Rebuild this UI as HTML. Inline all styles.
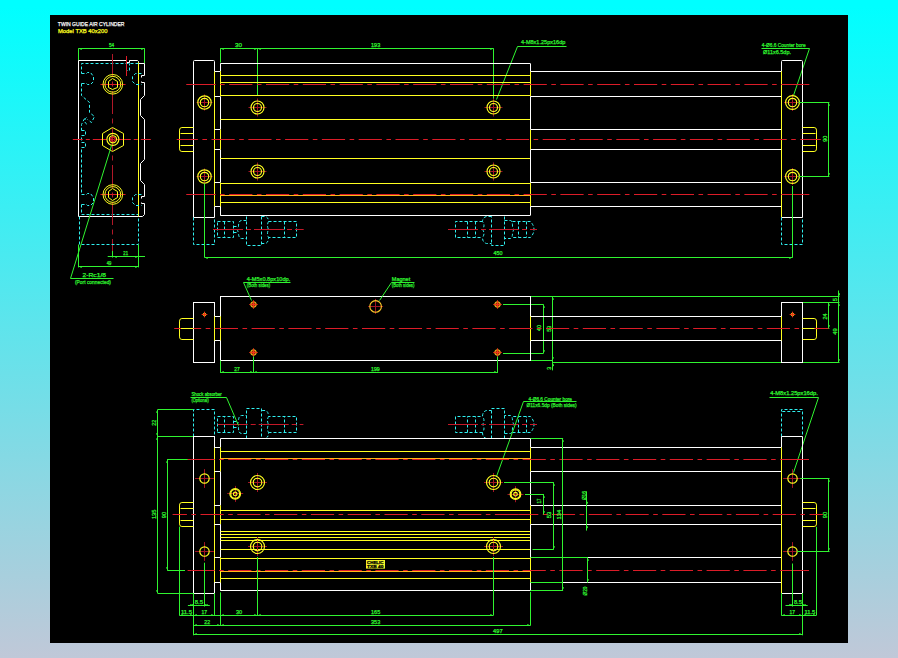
<!DOCTYPE html>
<html lang="en">
<head>
<meta charset="utf-8">
<title>Twin Guide Air Cylinder - TXB 40x200</title>
<style>
html,body{margin:0;padding:0;overflow:hidden;}
body{width:898px;height:658px;overflow:hidden;background:linear-gradient(to bottom,#00ffff 0px,#00ffff 6px,#c0c8d8 658px);font-family:"Liberation Sans",sans-serif;}
#sheet{position:absolute;left:50px;top:15px;width:798px;height:628px;background:#000;}
svg{position:absolute;left:0;top:0;}
svg path,svg circle,svg rect{fill:none;stroke-width:1;}
svg circle{stroke-width:1.15;}
svg text{font-family:"Liberation Sans",sans-serif;stroke-width:0.25;}
</style>
</head>
<body>
<div id="sheet"></div>
<svg width="898" height="658" viewBox="0 0 898 658">
<text x="57.8" y="25.8" fill="#fff" stroke="#fff" font-size="6.2" textLength="66.7" lengthAdjust="spacingAndGlyphs">TWIN GUIDE AIR CYLINDER</text>
<text x="58" y="32.8" fill="#ffff20" stroke="#ffff20" font-size="5.6" textLength="49.5" lengthAdjust="spacingAndGlyphs">Model TXB 40x200</text>
<path d="M78.4 48.5L144.7 48.5" stroke="#30f430"/>
<path d="M78.5 48.4L78.5 60.5" stroke="#30f430"/>
<path d="M144.5 48.4L144.5 63.4" stroke="#30f430"/>
<text x="109" y="46.5" fill="#30f430" stroke="#30f430" font-size="5.6" textLength="5.2" lengthAdjust="spacingAndGlyphs">54</text>
<path d="M78.5 216.5L78.5 60.5L126.5 60.5L126.5 62.5L129.5 62.5L129.5 60.5L137.5 60.5L138.5 61.5L138.5 63.5L144.5 63.5L144.5 75.5L141.5 75.5L141.5 77.5" stroke="#ffffff"/>
<path d="M141.5 81.5L141.5 82.5L144.5 82.5L144.5 95.5L140.5 99.5L140.5 115.5L144.5 119.5L144.5 159.5L140.5 163.5L140.5 180.5L144.5 184.5L144.5 196.5L141.5 196.5L141.5 198.5" stroke="#ffffff"/>
<path d="M141.5 202.5L141.5 203.5L144.5 203.5L144.5 214.5L142.5 216.5L78.5 216.5" stroke="#ffffff"/>
<path d="M138.5 62L138.5 216.4" stroke="#ffff20"/>
<path d="M138.5 63.5H81.5V73.5" stroke="#30f0f0" stroke-dasharray="3 2"/>
<path d="M126.5 63.5V70.5H129.5V63.5" stroke="#30f0f0" stroke-dasharray="3 2"/>
<path d="M81.5 73.5H86.5L87.5 72.5H90.5L93.5 76.5V81.5L90.5 84.5H87.5L86.5 83.5H81.5" stroke="#30f0f0" stroke-dasharray="3 2"/>
<path d="M141.5 73.5H135.5L132.5 76.5V81.5L135.5 84.5H141.5" stroke="#30f0f0" stroke-dasharray="3 2"/>
<path d="M81.5 83.5V95.5L89.5 102.5V112.5L94.5 116.5L91.5 122.5L87.5 119.5M84.5 118.5L81.5 124.5V130.5" stroke="#30f0f0" stroke-dasharray="3 2"/>
<path d="M86.5 117.5C83.5 119.5 84.5 124.5 88.5 124.5" stroke="#30f0f0" stroke-dasharray="3 2"/>
<path d="M81.5 130.5H85.5V135.5H81.5V142.5H85.5V147.5H81.5V194.5" stroke="#30f0f0" stroke-dasharray="3 2"/>
<path d="M81.5 194.5H86.5L87.5 193.5H90.5L93.5 197.5V202.5L90.5 205.5H87.5L86.5 204.5H81.5" stroke="#30f0f0" stroke-dasharray="3 2"/>
<path d="M141.5 194.5H135.5L132.5 197.5V202.5L135.5 205.5H141.5" stroke="#30f0f0" stroke-dasharray="3 2"/>
<path d="M81.5 204.5V214.5H138.5" stroke="#30f0f0" stroke-dasharray="3 2"/>
<path d="M112.5 54L112.5 252" stroke="#b01828" stroke-dasharray="23 4.5 5 4.5"/>
<path d="M72.8 139.5L150.8 139.5" stroke="#dc1c28" stroke-dasharray="14 3 4 3" stroke-dashoffset="4"/>
<path d="M126.5 56L126.5 76" stroke="#dc1c28"/>
<path d="M100.5 84.5L125.5 84.5" stroke="#dc1c28"/>
<circle cx="112.8" cy="84.3" r="9.8" stroke="#ffff20" style="stroke-width:1"/>
<circle cx="112.8" cy="84.3" r="7.9" stroke="#ffff20" style="stroke-width:1"/>
<path d="M112.5 78.5L117.5 81.5L117.5 87.5L112.5 89.5L108.5 87.5L108.5 81.5Z" stroke="#ffff20"/>
<path d="M100.5 194.5L125.5 194.5" stroke="#dc1c28"/>
<circle cx="112.8" cy="194.5" r="9.8" stroke="#ffff20" style="stroke-width:1"/>
<circle cx="112.8" cy="194.5" r="7.9" stroke="#ffff20" style="stroke-width:1"/>
<path d="M112.5 188.5L117.5 191.5L117.5 197.5L112.5 200.5L108.5 197.5L108.5 191.5Z" stroke="#ffff20"/>
<path d="M112.5 127.5L123.5 133.5L123.5 145.5L112.5 151.5L102.5 145.5L102.5 133.5Z" stroke="#ffff20"/>
<circle cx="112.9" cy="139.3" r="6" stroke="#ffff20"/>
<circle cx="112.9" cy="139.3" r="3.6" stroke="#ffff20"/>
<circle cx="112.9" cy="139.3" r="2.2" stroke="#dc1c28" fill="#e04010"/>
<path d="M79.5 216.5V244.5H138.5V216.5" stroke="#30f0f0" stroke-dasharray="3 2"/>
<path d="M112.5 251L112.5 257.5" stroke="#30f430"/>
<path d="M107.7 256.5L145 256.5" stroke="#30f430"/>
<path d="M138.5 244.5L138.5 267.4" stroke="#30f430"/>
<path d="M78.5 244.5L78.5 267.4" stroke="#30f430"/>
<path d="M78.4 266.5L138.6 266.5" stroke="#30f430"/>
<text x="123.3" y="254.8" fill="#30f430" stroke="#30f430" font-size="5.6" textLength="4.7" lengthAdjust="spacingAndGlyphs">21</text>
<text x="106.8" y="264.9" fill="#30f430" stroke="#30f430" font-size="5.6" textLength="4.6" lengthAdjust="spacingAndGlyphs">49</text>
<path d="M111.5 145.5L70.5 278.5L113.5 278.5" stroke="#30f430"/>
<text x="82.6" y="276.9" fill="#30f430" stroke="#30f430" font-size="5.6" textLength="23.4" lengthAdjust="spacingAndGlyphs">2-Rc1/8</text>
<text x="75" y="284.1" fill="#30f430" stroke="#30f430" font-size="5.6" textLength="36" lengthAdjust="spacingAndGlyphs">(Port connected)</text>
<path d="M220.3 48.5L493.5 48.5" stroke="#30f430"/>
<path d="M220.5 48.4L220.5 62.5" stroke="#30f430"/>
<path d="M257.5 48.4L257.5 96" stroke="#30f430"/>
<path d="M493.5 48.4L493.5 99" stroke="#30f430"/>
<text x="235" y="46.5" fill="#30f430" stroke="#30f430" font-size="5.6" textLength="7" lengthAdjust="spacingAndGlyphs">30</text>
<text x="371" y="46.5" fill="#30f430" stroke="#30f430" font-size="5.6" textLength="9.2" lengthAdjust="spacingAndGlyphs">193</text>
<path d="M566.5 46.5L517.5 46.5L496.5 99.5" stroke="#30f430"/>
<text x="521" y="44" fill="#30f430" stroke="#30f430" font-size="5.6" textLength="44.3" lengthAdjust="spacingAndGlyphs">4-M8x1.25px16dp</text>
<path d="M761.5 48.5L809.5 48.5L793.5 95.5" stroke="#30f430"/>
<text x="761.8" y="46.9" fill="#30f430" stroke="#30f430" font-size="5.6" textLength="43.8" lengthAdjust="spacingAndGlyphs">4-Ø6.6 Counter bore</text>
<text x="763" y="53.7" fill="#30f430" stroke="#30f430" font-size="5.6" textLength="28" lengthAdjust="spacingAndGlyphs">Ø11x6.5dp.</text>
<path d="M193.5 217.5V61.5Q193.5 60.5 194.5 60.5H213.5Q214.5 60.5 214.5 61.5" stroke="#ffffff"/>
<path d="M193.4 217.5L214.6 217.5" stroke="#ffffff"/>
<path d="M214.5 61.5L214.5 71.2" stroke="#ffffff"/>
<path d="M214.5 71.2L214.5 206.5" stroke="#ffff20"/>
<path d="M214.5 206.5L214.5 217.3" stroke="#ffffff"/>
<path d="M214.6 71.5L220.3 71.5" stroke="#ffffff"/>
<path d="M214.6 96.5L220.3 96.5" stroke="#ffffff"/>
<path d="M214.6 129.5L220.3 129.5" stroke="#ffffff"/>
<path d="M214.6 149.5L220.3 149.5" stroke="#ffffff"/>
<path d="M214.6 182.5L220.3 182.5" stroke="#ffffff"/>
<path d="M214.6 206.5L220.3 206.5" stroke="#ffffff"/>
<path d="M220.5 63.6L220.5 71.2" stroke="#ffffff"/>
<path d="M220.5 71.2L220.5 96.5" stroke="#ffff20"/>
<path d="M220.5 96.5L220.5 129.5" stroke="#ffffff"/>
<path d="M220.5 129.5L220.5 149.7" stroke="#ffff20"/>
<path d="M220.5 149.7L220.5 182.6" stroke="#ffffff"/>
<path d="M220.5 182.6L220.5 215.3" stroke="#ffff20"/>
<path d="M220.5 206.5L220.5 215.3" stroke="#ffffff"/>
<path d="M220.3 63.5L530.4 63.5" stroke="#ffffff"/>
<path d="M220.3 215.5L530.4 215.5" stroke="#ffffff"/>
<path d="M220.3 75.5L530.4 75.5" stroke="#ffff20"/>
<path d="M220.3 82.5L530.4 82.5" stroke="#ffff20"/>
<path d="M220.3 95.5L530.4 95.5" stroke="#ffff20"/>
<path d="M220.3 119.5L530.4 119.5" stroke="#ffff20"/>
<path d="M220.3 158.5L530.4 158.5" stroke="#ffff20"/>
<path d="M220.3 183.5L530.4 183.5" stroke="#ffff20"/>
<path d="M220.3 202.5L530.4 202.5" stroke="#ffff20"/>
<path d="M530.5 63.6L530.5 71.2" stroke="#ffffff"/>
<path d="M530.5 71.2L530.5 96.5" stroke="#ffff20"/>
<path d="M530.5 96.5L530.5 129.5" stroke="#ffffff"/>
<path d="M530.5 129.5L530.5 149.7" stroke="#ffff20"/>
<path d="M530.5 149.7L530.5 182.6" stroke="#ffffff"/>
<path d="M530.5 182.6L530.5 206.5" stroke="#ffff20"/>
<path d="M530.5 206.5L530.5 215.3" stroke="#ffffff"/>
<path d="M530.4 71.5L781.3 71.5" stroke="#ffffff"/>
<path d="M530.4 96.5L781.3 96.5" stroke="#ffffff"/>
<path d="M530.4 129.5L781.3 129.5" stroke="#ffffff"/>
<path d="M530.4 149.5L781.3 149.5" stroke="#ffffff"/>
<path d="M530.4 182.5L781.3 182.5" stroke="#ffffff"/>
<path d="M530.4 206.5L781.3 206.5" stroke="#ffffff"/>
<path d="M781.5 71.5V61.5Q781.5 60.5 782.5 60.5H801.5Q802.5 60.5 802.5 61.5V217.5H781.5" stroke="#ffffff"/>
<path d="M781.5 71.2L781.5 217.3" stroke="#ffff20"/>
<path d="M193.5 127.5H181.9Q179.5 127.5 179.5 130.1V148.9Q179.5 151.5 181.9 151.5H193.5" stroke="#ffff20"/>
<path d="M193.5 133.5L180.5 133.5" stroke="#ffff20"/>
<path d="M193.5 145.5L180.5 145.5" stroke="#ffff20"/>
<path d="M802.5 127.5H814.1Q816.5 127.5 816.5 130.1V148.9Q816.5 151.5 814.1 151.5H802.5" stroke="#ffff20"/>
<path d="M802.5 133.5L815.5 133.5" stroke="#ffff20"/>
<path d="M802.5 145.5L815.5 145.5" stroke="#ffff20"/>
<path d="M186.5 84.5L809.2 84.5" stroke="#dc1c28" stroke-dasharray="23.2 4.5 4.6 4.5" stroke-dashoffset="30.9"/>
<path d="M186.5 84.5L192.4 84.5" stroke="#dc1c28"/>
<path d="M804.4 84.5L809.2 84.5" stroke="#dc1c28"/>
<path d="M176.7 139.5L820.8 139.5" stroke="#dc1c28" stroke-dasharray="23.2 4.5 4.6 4.5" stroke-dashoffset="2"/>
<path d="M220.3 195.5L530.4 195.5" stroke="#ffb818"/>
<path d="M186.5 194.5L809.2 194.5" stroke="#dc1c28" stroke-dasharray="23.2 4.5 4.6 4.5" stroke-dashoffset="30.9"/>
<path d="M186.5 194.5L192.4 194.5" stroke="#dc1c28"/>
<path d="M804.4 194.5L809.2 194.5" stroke="#dc1c28"/>
<path d="M196.5 102.5L212.5 102.5" stroke="#a01424"/>
<path d="M204.5 94.5L204.5 110.5" stroke="#a01424"/>
<circle cx="204.5" cy="102.5" r="6.7" stroke="#ffff20"/>
<circle cx="204.5" cy="102.5" r="4.2" stroke="#ffff20"/>
<path d="M196.5 176.5L212.5 176.5" stroke="#a01424"/>
<path d="M204.5 168.5L204.5 184.5" stroke="#a01424"/>
<circle cx="204.5" cy="176.5" r="6.7" stroke="#ffff20"/>
<circle cx="204.5" cy="176.5" r="4.2" stroke="#ffff20"/>
<path d="M248.5 107.5L266.5 107.5" stroke="#a01424"/>
<path d="M257.5 98.5L257.5 116.5" stroke="#a01424"/>
<circle cx="257.5" cy="107.5" r="6.5" stroke="#ffff20"/>
<circle cx="257.5" cy="107.5" r="4" stroke="#ffff20"/>
<path d="M248.5 171.5L266.5 171.5" stroke="#a01424"/>
<path d="M257.5 162.5L257.5 180.5" stroke="#a01424"/>
<circle cx="257.5" cy="171.5" r="6.5" stroke="#ffff20"/>
<circle cx="257.5" cy="171.5" r="4" stroke="#ffff20"/>
<path d="M484.5 107.5L502.5 107.5" stroke="#a01424"/>
<path d="M493.5 98.5L493.5 116.5" stroke="#a01424"/>
<circle cx="493.5" cy="107.5" r="6.5" stroke="#ffff20"/>
<circle cx="493.5" cy="107.5" r="4" stroke="#ffff20"/>
<path d="M484.5 171.5L502.5 171.5" stroke="#a01424"/>
<path d="M493.5 162.5L493.5 180.5" stroke="#a01424"/>
<circle cx="493.5" cy="171.5" r="6.5" stroke="#ffff20"/>
<circle cx="493.5" cy="171.5" r="4" stroke="#ffff20"/>
<path d="M784 102.5L801 102.5" stroke="#a01424"/>
<path d="M792.5 94L792.5 111" stroke="#a01424"/>
<circle cx="792.5" cy="102.5" r="6.9" stroke="#ffff20"/>
<circle cx="792.5" cy="102.5" r="4.2" stroke="#ffff20"/>
<path d="M784 176.5L801 176.5" stroke="#a01424"/>
<path d="M792.5 168L792.5 185" stroke="#a01424"/>
<circle cx="792.5" cy="176.5" r="6.9" stroke="#ffff20"/>
<circle cx="792.5" cy="176.5" r="4.2" stroke="#ffff20"/>
<path d="M798.5 102.5L829.4 102.5" stroke="#30f430"/>
<path d="M798.5 176.5L829.4 176.5" stroke="#30f430"/>
<path d="M828.5 102.3L828.5 176.2" stroke="#30f430"/>
<text x="826.8" y="138.8" fill="#30f430" stroke="#30f430" font-size="5.6" textLength="6" lengthAdjust="spacingAndGlyphs" text-anchor="middle" transform="rotate(-90 826.8 138.8)">90</text>
<path d="M193.5 217.5V244.5H214.5V217.5" stroke="#30f0f0" stroke-dasharray="3 2"/>
<path d="M781.5 217.5V244.5H802.5V217.5" stroke="#30f0f0" stroke-dasharray="3 2"/>
<path d="M217.5 221.5 L233.5 221.5 L233.5 237.5 L217.5 237.5 Z" stroke="#30f0f0" stroke-dasharray="3 2"/>
<path d="M224.5 221.5 L224.5 237.5 " stroke="#30f0f0" stroke-dasharray="3 2"/>
<path d="M233.5 226.5 L238.5 226.5 M233.5 232.5 L238.5 232.5 " stroke="#30f0f0" stroke-dasharray="3 2"/>
<path d="M246.5 220.5 L241.5 220.5 Q238.5 220.5 238.5 226.5 Q236.5 229.5 238.5 232.5 Q238.5 238.5 241.5 238.5 L246.5 238.5 " stroke="#30f0f0" stroke-dasharray="3 2"/>
<path d="M246.5 216.5 L246.5 245.5 L261.5 245.5 L261.5 216.5 " stroke="#30f0f0" stroke-dasharray="3 2"/>
<path d="M261.5 216.5 L265.5 216.5 Q268.5 217.5 268.5 221.5 Q266.5 225.5 268.5 229.5 Q266.5 233.5 268.5 237.5 Q268.5 242.5 265.5 243.5 L261.5 243.5 " stroke="#30f0f0" stroke-dasharray="3 2"/>
<path d="M268.5 221.5 L296.5 221.5 L296.5 237.5 L268.5 237.5 " stroke="#30f0f0" stroke-dasharray="3 2"/>
<path d="M284.5 221.5 L284.5 237.5 " stroke="#30f0f0" stroke-dasharray="3 2"/>
<path d="M213 229.5L303.7 229.5" stroke="#c41828" stroke-dasharray="30 3 5 3"/>
<path d="M512.5 221.5 L530.5 221.5 Q537.5 229.5 530.5 237.5 L512.5 237.5 " stroke="#30f0f0" stroke-dasharray="3 2"/>
<path d="M518.5 221.5 L518.5 237.5 M526.5 221.5 L526.5 237.5 " stroke="#30f0f0" stroke-dasharray="3 2"/>
<path d="M504.5 220.5 L510.5 220.5 Q512.5 220.5 512.5 226.5 Q514.5 229.5 512.5 232.5 Q512.5 238.5 510.5 238.5 L504.5 238.5 " stroke="#30f0f0" stroke-dasharray="3 2"/>
<path d="M504.5 216.5 L504.5 245.5 L491.5 245.5 L491.5 216.5 " stroke="#30f0f0" stroke-dasharray="3 2"/>
<path d="M491.5 216.5 L486.5 216.5 Q482.5 217.5 482.5 221.5 Q485.5 225.5 482.5 229.5 Q485.5 233.5 482.5 237.5 Q482.5 242.5 486.5 243.5 L491.5 243.5 " stroke="#30f0f0" stroke-dasharray="3 2"/>
<path d="M482.5 221.5 L455.5 221.5 L455.5 237.5 L482.5 237.5 " stroke="#30f0f0" stroke-dasharray="3 2"/>
<path d="M467.5 221.5 L467.5 237.5 M475.5 221.5 L475.5 237.5 " stroke="#30f0f0" stroke-dasharray="3 2"/>
<path d="M448 229.5L537 229.5" stroke="#c41828" stroke-dasharray="30 3 5 3"/>
<path d="M204.5 183.5L204.5 257.6" stroke="#30f430"/>
<path d="M792.5 186L792.5 257.6" stroke="#30f430"/>
<path d="M204.6 257.5L792.6 257.5" stroke="#30f430"/>
<text x="493.5" y="255.4" fill="#30f430" stroke="#30f430" font-size="5.6" textLength="8.9" lengthAdjust="spacingAndGlyphs">450</text>
<path d="M530.6 296.5L839.5 296.5" stroke="#30f430"/>
<path d="M552.2 362.5L839.5 362.5" stroke="#30f430"/>
<path d="M530.6 360.5L552.2 360.5" stroke="#30f430"/>
<path d="M552.5 296.4L552.5 370.4" stroke="#30f430"/>
<path d="M838.5 290.5L838.5 362.8" stroke="#30f430"/>
<path d="M802.2 302.5L839.5 302.5" stroke="#30f430"/>
<path d="M828.5 302.4L828.5 328.7" stroke="#30f430"/>
<path d="M824.4 328.5L829.4 328.5" stroke="#30f430"/>
<text x="836.6" y="299.6" fill="#30f430" stroke="#30f430" font-size="5.6" textLength="3.2" lengthAdjust="spacingAndGlyphs" text-anchor="middle" transform="rotate(-90 836.6 299.6)">5</text>
<text x="826.8" y="316.4" fill="#30f430" stroke="#30f430" font-size="5.6" textLength="6" lengthAdjust="spacingAndGlyphs" text-anchor="middle" transform="rotate(-90 826.8 316.4)">24</text>
<text x="836.8" y="331.6" fill="#30f430" stroke="#30f430" font-size="5.6" textLength="6.4" lengthAdjust="spacingAndGlyphs" text-anchor="middle" transform="rotate(-90 836.8 331.6)">49</text>
<text x="550.6" y="328.8" fill="#30f430" stroke="#30f430" font-size="5.6" textLength="6" lengthAdjust="spacingAndGlyphs" text-anchor="middle" transform="rotate(-90 550.6 328.8)">53</text>
<text x="550.6" y="368.2" fill="#30f430" stroke="#30f430" font-size="5.6" textLength="3" lengthAdjust="spacingAndGlyphs" text-anchor="middle" transform="rotate(-90 550.6 368.2)">3</text>
<path d="M503 304.5L543.6 304.5" stroke="#30f430"/>
<path d="M503 353.5L543.6 353.5" stroke="#30f430"/>
<path d="M543.5 304.5L543.5 353.1" stroke="#30f430"/>
<text x="541" y="328" fill="#30f430" stroke="#30f430" font-size="5.6" textLength="6" lengthAdjust="spacingAndGlyphs" text-anchor="middle" transform="rotate(-90 541 328)">40</text>
<rect x="220.5" y="296.5" width="310" height="64" stroke="#ffffff"/>
<rect x="193.5" y="302.5" width="21" height="60" stroke="#ffffff"/>
<path d="M214.7 316.5L220.4 316.5" stroke="#ffffff"/>
<path d="M214.7 340.5L220.4 340.5" stroke="#ffffff"/>
<path d="M214.5 316.3L214.5 340.5" stroke="#ffff20"/>
<path d="M220.5 316.3L220.5 340.5" stroke="#ffff20"/>
<path d="M530.6 316.5L781.3 316.5" stroke="#ffffff"/>
<path d="M530.6 340.5L781.3 340.5" stroke="#ffffff"/>
<path d="M530.5 316.3L530.5 340.5" stroke="#ffff20"/>
<rect x="781.5" y="302.5" width="21" height="60" stroke="#ffffff"/>
<path d="M781.5 316.3L781.5 340.5" stroke="#ffff20"/>
<path d="M193.5 318.5H181.9Q179.5 318.5 179.5 321.1V336.9Q179.5 339.5 181.9 339.5H193.5" stroke="#ffff20"/>
<path d="M802.5 318.5H814.1Q816.5 318.5 816.5 321.1V336.9Q816.5 339.5 814.1 339.5H802.5" stroke="#ffff20"/>
<path d="M174.2 328.5L828.6 328.5" stroke="#dc1c28" stroke-dasharray="23.2 4.5 4.6 4.5" stroke-dashoffset="33"/>
<path d="M174.2 328.5L178 328.5" stroke="#dc1c28"/>
<path d="M826.8 328.5L828.6 328.5" stroke="#dc1c28"/>
<path d="M181 328.5L193.4 328.5" stroke="#ffff20"/>
<path d="M802.2 328.5L814.5 328.5" stroke="#ffff20"/>
<circle cx="253.5" cy="304.5" r="2.8" stroke="#ffd820" style="fill:#a02408;stroke-width:1"/>
<path d="M249.3 304.5L257.7 304.5" stroke="#f03818"/>
<path d="M253.5 300.3L253.5 308.7" stroke="#f03818"/>
<circle cx="253.5" cy="352.5" r="2.8" stroke="#ffd820" style="fill:#a02408;stroke-width:1"/>
<path d="M249.3 352.5L257.7 352.5" stroke="#f03818"/>
<path d="M253.5 348.3L253.5 356.7" stroke="#f03818"/>
<circle cx="497.5" cy="304.5" r="2.8" stroke="#ffd820" style="fill:#a02408;stroke-width:1"/>
<path d="M493.3 304.5L501.7 304.5" stroke="#f03818"/>
<path d="M497.5 300.3L497.5 308.7" stroke="#f03818"/>
<circle cx="497.5" cy="352.5" r="2.8" stroke="#ffd820" style="fill:#a02408;stroke-width:1"/>
<path d="M493.3 352.5L501.7 352.5" stroke="#f03818"/>
<path d="M497.5 348.3L497.5 356.7" stroke="#f03818"/>
<circle cx="204.5" cy="314.5" r="1.4" stroke="#ffd820" style="fill:#a02408;stroke-width:1"/>
<path d="M201.7 314.5L207.3 314.5" stroke="#f03818"/>
<path d="M204.5 311.7L204.5 317.3" stroke="#f03818"/>
<circle cx="792.5" cy="314.5" r="1.4" stroke="#ffd820" style="fill:#a02408;stroke-width:1"/>
<path d="M789.7 314.5L795.3 314.5" stroke="#f03818"/>
<path d="M792.5 311.7L792.5 317.3" stroke="#f03818"/>
<path d="M368.1 306.5L383.1 306.5" stroke="#a01424"/>
<path d="M375.5 298.9L375.5 313.9" stroke="#a01424"/>
<circle cx="375.6" cy="306.4" r="5.8" stroke="#ffc828"/>
<path d="M414.5 282.5L391.5 282.5L379.5 300.5" stroke="#30f430"/>
<text x="391.8" y="280.6" fill="#30f430" stroke="#30f430" font-size="5.6" textLength="18.4" lengthAdjust="spacingAndGlyphs">Magnet</text>
<text x="391.8" y="286.7" fill="#30f430" stroke="#30f430" font-size="5.6" textLength="22.6" lengthAdjust="spacingAndGlyphs">(Both sides)</text>
<path d="M290.5 282.5L243.5 282.5L251.5 300.5" stroke="#30f430"/>
<text x="246.8" y="280.7" fill="#30f430" stroke="#30f430" font-size="5.6" textLength="43.4" lengthAdjust="spacingAndGlyphs">4-M5x0.8px10dp.</text>
<text x="246.8" y="286.9" fill="#30f430" stroke="#30f430" font-size="5.6" textLength="23.4" lengthAdjust="spacingAndGlyphs">(Both sides)</text>
<path d="M220.5 360.5L220.5 373" stroke="#30f430"/>
<path d="M253.5 356.5L253.5 373" stroke="#30f430"/>
<path d="M497.5 356.5L497.5 373" stroke="#30f430"/>
<path d="M220.4 372.5L497.6 372.5" stroke="#30f430"/>
<text x="234.3" y="370.7" fill="#30f430" stroke="#30f430" font-size="5.6" textLength="5.5" lengthAdjust="spacingAndGlyphs">27</text>
<text x="371" y="370.7" fill="#30f430" stroke="#30f430" font-size="5.6" textLength="8.8" lengthAdjust="spacingAndGlyphs">199</text>
<path d="M157.5 409.7L157.5 593.1" stroke="#30f430"/>
<path d="M157.5 409.5L193.4 409.5" stroke="#30f430"/>
<path d="M157.5 436.5L193.4 436.5" stroke="#30f430"/>
<path d="M157.5 593.5L193.4 593.5" stroke="#30f430"/>
<text x="155.8" y="422.8" fill="#30f430" stroke="#30f430" font-size="5.6" textLength="6" lengthAdjust="spacingAndGlyphs" text-anchor="middle" transform="rotate(-90 155.8 422.8)">22</text>
<text x="155.8" y="514.3" fill="#30f430" stroke="#30f430" font-size="5.6" textLength="9.6" lengthAdjust="spacingAndGlyphs" text-anchor="middle" transform="rotate(-90 155.8 514.3)">135</text>
<path d="M167.5 459.2L167.5 570.4" stroke="#30f430"/>
<path d="M167.2 459.5L188 459.5" stroke="#30f430"/>
<path d="M167.2 570.5L185 570.5" stroke="#30f430"/>
<text x="165.8" y="515" fill="#30f430" stroke="#30f430" font-size="5.6" textLength="6.4" lengthAdjust="spacingAndGlyphs" text-anchor="middle" transform="rotate(-90 165.8 515)">90</text>
<path d="M193.5 436.5V409.5H214.5V436.5" stroke="#30f0f0" stroke-dasharray="3 2"/>
<path d="M781.5 436.5V409.5H802.5V436.5" stroke="#30f0f0" stroke-dasharray="3 2"/>
<path d="M782.3 411.5L801.2 411.5" stroke="#30f0f0" stroke-dasharray="3 2"/>
<path d="M217.5 432.5 L233.5 432.5 L233.5 416.5 L217.5 416.5 Z" stroke="#30f0f0" stroke-dasharray="3 2"/>
<path d="M224.5 432.5 L224.5 416.5 " stroke="#30f0f0" stroke-dasharray="3 2"/>
<path d="M233.5 427.5 L238.5 427.5 M233.5 421.5 L238.5 421.5 " stroke="#30f0f0" stroke-dasharray="3 2"/>
<path d="M246.5 433.5 L241.5 433.5 Q238.5 433.5 238.5 427.5 Q236.5 424.5 238.5 421.5 Q238.5 415.5 241.5 415.5 L246.5 415.5 " stroke="#30f0f0" stroke-dasharray="3 2"/>
<path d="M246.5 438.5 L246.5 408.5 L261.5 408.5 L261.5 438.5 " stroke="#30f0f0" stroke-dasharray="3 2"/>
<path d="M261.5 438.5 L265.5 438.5 Q268.5 437.5 268.5 432.5 Q266.5 428.5 268.5 424.5 Q266.5 420.5 268.5 416.5 Q268.5 411.5 265.5 410.5 L261.5 410.5 " stroke="#30f0f0" stroke-dasharray="3 2"/>
<path d="M268.5 432.5 L296.5 432.5 L296.5 416.5 L268.5 416.5 " stroke="#30f0f0" stroke-dasharray="3 2"/>
<path d="M284.5 432.5 L284.5 416.5 " stroke="#30f0f0" stroke-dasharray="3 2"/>
<path d="M217.7 424.5L303.4 424.5" stroke="#c41828" stroke-dasharray="30 3 5 3"/>
<path d="M512.5 432.5 L530.5 432.5 Q537.5 424.5 530.5 416.5 L512.5 416.5 " stroke="#30f0f0" stroke-dasharray="3 2"/>
<path d="M518.5 432.5 L518.5 416.5 M526.5 432.5 L526.5 416.5 " stroke="#30f0f0" stroke-dasharray="3 2"/>
<path d="M504.5 433.5 L510.5 433.5 Q512.5 433.5 512.5 427.5 Q514.5 424.5 512.5 421.5 Q512.5 415.5 510.5 415.5 L504.5 415.5 " stroke="#30f0f0" stroke-dasharray="3 2"/>
<path d="M504.5 438.5 L504.5 408.5 L491.5 408.5 L491.5 438.5 " stroke="#30f0f0" stroke-dasharray="3 2"/>
<path d="M491.5 438.5 L486.5 438.5 Q482.5 437.5 482.5 432.5 Q485.5 428.5 482.5 424.5 Q485.5 420.5 482.5 416.5 Q482.5 411.5 486.5 410.5 L491.5 410.5 " stroke="#30f0f0" stroke-dasharray="3 2"/>
<path d="M482.5 432.5 L455.5 432.5 L455.5 416.5 L482.5 416.5 " stroke="#30f0f0" stroke-dasharray="3 2"/>
<path d="M467.5 432.5 L467.5 416.5 M475.5 432.5 L475.5 416.5 " stroke="#30f0f0" stroke-dasharray="3 2"/>
<path d="M448 424.5L537 424.5" stroke="#c41828" stroke-dasharray="30 3 5 3"/>
<path d="M190.5 397.5L226.5 397.5L238.5 425.5" stroke="#30f430"/>
<text x="191.4" y="395.9" fill="#30f430" stroke="#30f430" font-size="5.6" textLength="30.4" lengthAdjust="spacingAndGlyphs">Shock absorber</text>
<text x="191.4" y="401.8" fill="#30f430" stroke="#30f430" font-size="5.6" textLength="17.4" lengthAdjust="spacingAndGlyphs">(Optional)</text>
<path d="M576.5 401.5L523.5 401.5L496.5 476.5" stroke="#30f430"/>
<text x="528.5" y="400.5" fill="#30f430" stroke="#30f430" font-size="5.6" textLength="43.5" lengthAdjust="spacingAndGlyphs">4-Ø6.6 Counter bore</text>
<text x="526.5" y="406.5" fill="#30f430" stroke="#30f430" font-size="5.6" textLength="50.1" lengthAdjust="spacingAndGlyphs">Ø11x6.5dp (Both sides)</text>
<path d="M769.5 397.5L818.5 397.5L793.5 472.5" stroke="#30f430"/>
<text x="770.2" y="395.1" fill="#30f430" stroke="#30f430" font-size="5.6" textLength="47.6" lengthAdjust="spacingAndGlyphs">4-M8x1.25px16dp.</text>
<rect x="193.5" y="436.5" width="21" height="157" stroke="#ffffff"/>
<path d="M214.5 447.4L214.5 582.6" stroke="#ffff20"/>
<path d="M214.4 447.5L220.5 447.5" stroke="#ffffff"/>
<path d="M214.4 471.5L220.5 471.5" stroke="#ffffff"/>
<path d="M214.4 505.5L220.5 505.5" stroke="#ffffff"/>
<path d="M214.4 524.5L220.5 524.5" stroke="#ffffff"/>
<path d="M214.4 557.5L220.5 557.5" stroke="#ffffff"/>
<path d="M214.4 582.5L220.5 582.5" stroke="#ffffff"/>
<path d="M220.5 438.5L220.5 447.4" stroke="#ffffff"/>
<path d="M220.5 447.4L220.5 471.6" stroke="#ffff20"/>
<path d="M220.5 471.6L220.5 505.4" stroke="#ffffff"/>
<path d="M220.5 505.4L220.5 524.3" stroke="#ffff20"/>
<path d="M220.5 524.3L220.5 557.3" stroke="#ffffff"/>
<path d="M220.5 557.3L220.5 590.5" stroke="#ffff20"/>
<path d="M220.5 582.6L220.5 590.5" stroke="#ffffff"/>
<path d="M220.5 438.5L530.6 438.5" stroke="#ffffff"/>
<path d="M220.5 590.5L530.6 590.5" stroke="#ffffff"/>
<path d="M220.5 451.5L530.6 451.5" stroke="#ffff20"/>
<path d="M220.5 510.5L530.6 510.5" stroke="#ffff20"/>
<path d="M220.5 519.5L530.6 519.5" stroke="#ffff20"/>
<path d="M220.5 531.5L530.6 531.5" stroke="#ffff20"/>
<path d="M220.5 534.5L530.6 534.5" stroke="#ffff20"/>
<path d="M220.5 537.5L530.6 537.5" stroke="#ffff20"/>
<path d="M220.5 540.5L530.6 540.5" stroke="#ffff20"/>
<path d="M220.5 549.5L530.6 549.5" stroke="#ffff20"/>
<path d="M220.5 558.5L530.6 558.5" stroke="#ffff20"/>
<path d="M220.5 578.5L530.6 578.5" stroke="#ffff20"/>
<path d="M530.5 438.5L530.5 447.4" stroke="#ffffff"/>
<path d="M530.5 447.4L530.5 471.6" stroke="#ffff20"/>
<path d="M530.5 471.6L530.5 505.4" stroke="#ffffff"/>
<path d="M530.5 505.4L530.5 524.3" stroke="#ffff20"/>
<path d="M530.5 524.3L530.5 557.3" stroke="#ffffff"/>
<path d="M530.5 557.3L530.5 582.6" stroke="#ffff20"/>
<path d="M530.5 582.6L530.5 590.5" stroke="#ffffff"/>
<path d="M530.6 447.5L781.3 447.5" stroke="#ffffff"/>
<path d="M530.6 471.5L781.3 471.5" stroke="#ffffff"/>
<path d="M530.6 505.5L781.3 505.5" stroke="#ffffff"/>
<path d="M530.6 524.5L781.3 524.5" stroke="#ffffff"/>
<path d="M530.6 557.5L781.3 557.5" stroke="#ffffff"/>
<path d="M530.6 582.5L781.3 582.5" stroke="#ffffff"/>
<path d="M781.5 447.5V436.5H802.5V593.5H781.5" stroke="#ffffff"/>
<path d="M781.5 447.4L781.5 593.1" stroke="#ffff20"/>
<path d="M193.5 502.5H181.9Q179.5 502.5 179.5 505.1V523.9Q179.5 526.5 181.9 526.5H193.5" stroke="#ffff20"/>
<path d="M193.5 508.5L180.5 508.5" stroke="#ffff20"/>
<path d="M193.5 520.5L180.5 520.5" stroke="#ffff20"/>
<path d="M802.5 502.5H814.1Q816.5 502.5 816.5 505.1V523.9Q816.5 526.5 814.1 526.5H802.5" stroke="#ffff20"/>
<path d="M802.5 508.5L815.5 508.5" stroke="#ffff20"/>
<path d="M802.5 520.5L815.5 520.5" stroke="#ffff20"/>
<path d="M220.5 458.5L530.6 458.5" stroke="#ffb818"/>
<path d="M220.5 571.5L530.6 571.5" stroke="#ffb818"/>
<path d="M187.6 459.5L809 459.5" stroke="#dc1c28" stroke-dasharray="23.2 4.5 4.6 4.5" stroke-dashoffset="33"/>
<path d="M187.6 459.5L191.4 459.5" stroke="#dc1c28"/>
<path d="M803.4 459.5L809 459.5" stroke="#dc1c28"/>
<path d="M172.6 514.5L530.5 514.5" stroke="#dc1c28" stroke-dasharray="23.2 4.5 4.6 4.5" stroke-dashoffset="8.9"/>
<path d="M518.1 514.5L530.5 514.5" stroke="#dc1c28"/>
<path d="M530.5 514.5L822.8 514.5" stroke="#dc1c28" stroke-dasharray="23.2 4.5 4.6 4.5" stroke-dashoffset="15.4"/>
<path d="M187.6 570.5L809 570.5" stroke="#dc1c28" stroke-dasharray="23.2 4.5 4.6 4.5" stroke-dashoffset="33"/>
<path d="M187.6 570.5L191.4 570.5" stroke="#dc1c28"/>
<path d="M803.4 570.5L809 570.5" stroke="#dc1c28"/>
<rect x="366" y="560" width="19" height="8.6" style="fill:#f4f428;stroke:none"/>
<text x="367" y="563.7" fill="#000" stroke="#000" font-size="3.6" textLength="16.5" lengthAdjust="spacingAndGlyphs" font-weight="bold">CHELIC</text>
<text x="367" y="567.7" fill="#000" stroke="#000" font-size="3.6" textLength="16.5" lengthAdjust="spacingAndGlyphs" font-weight="bold">TXB 40</text>
<path d="M195.1 478.5L213.9 478.5" stroke="#a01424"/>
<path d="M204.5 469.1L204.5 487.9" stroke="#a01424"/>
<circle cx="204.5" cy="478.5" r="4.7" stroke="#ffff20"/>
<path d="M195.1 551.5L213.9 551.5" stroke="#a01424"/>
<path d="M204.5 542.1L204.5 560.9" stroke="#a01424"/>
<circle cx="204.5" cy="551.5" r="4.7" stroke="#ffff20"/>
<path d="M783.1 478.5L801.9 478.5" stroke="#a01424"/>
<path d="M792.5 469.1L792.5 487.9" stroke="#a01424"/>
<circle cx="792.5" cy="478.5" r="4.7" stroke="#ffff20"/>
<path d="M783.1 551.5L801.9 551.5" stroke="#a01424"/>
<path d="M792.5 542.1L792.5 560.9" stroke="#a01424"/>
<circle cx="792.5" cy="551.5" r="4.7" stroke="#ffff20"/>
<path d="M248 482.5L267 482.5" stroke="#a01424"/>
<path d="M257.5 473L257.5 492" stroke="#a01424"/>
<circle cx="257.5" cy="482.5" r="7" stroke="#ffff20"/>
<circle cx="257.5" cy="482.5" r="4.3" stroke="#ffff20"/>
<path d="M248 546.5L267 546.5" stroke="#a01424"/>
<path d="M257.5 537L257.5 556" stroke="#a01424"/>
<circle cx="257.5" cy="546.5" r="7" stroke="#ffff20"/>
<circle cx="257.5" cy="546.5" r="4.3" stroke="#ffff20"/>
<path d="M484 482.5L503 482.5" stroke="#a01424"/>
<path d="M493.5 473L493.5 492" stroke="#a01424"/>
<circle cx="493.5" cy="482.5" r="7" stroke="#ffff20"/>
<circle cx="493.5" cy="482.5" r="4.3" stroke="#ffff20"/>
<path d="M484 546.5L503 546.5" stroke="#a01424"/>
<path d="M493.5 537L493.5 556" stroke="#a01424"/>
<circle cx="493.5" cy="546.5" r="7" stroke="#ffff20"/>
<circle cx="493.5" cy="546.5" r="4.3" stroke="#ffff20"/>
<path d="M227.2 493.5L243.2 493.5" stroke="#a01424"/>
<path d="M235.5 485.9L235.5 501.9" stroke="#a01424"/>
<circle cx="235.2" cy="493.9" r="5.3" stroke="#ffff20"/>
<circle cx="235.2" cy="493.9" r="4.4" stroke="#ffff20"/>
<circle cx="235.2" cy="493.9" r="1.8" stroke="#ffff20"/>
<path d="M507.5 494.5L523.5 494.5" stroke="#a01424"/>
<path d="M515.5 486.2L515.5 502.2" stroke="#a01424"/>
<circle cx="515.5" cy="494.2" r="5.3" stroke="#ffff20"/>
<circle cx="515.5" cy="494.2" r="4.4" stroke="#ffff20"/>
<circle cx="515.5" cy="494.2" r="1.8" stroke="#ffff20"/>
<path d="M530.6 438.5L563.1 438.5" stroke="#30f430"/>
<path d="M530.6 590.5L563.1 590.5" stroke="#30f430"/>
<path d="M562.5 438.5L562.5 590.5" stroke="#30f430"/>
<text x="560.6" y="514.6" fill="#30f430" stroke="#30f430" font-size="5.6" textLength="9.6" lengthAdjust="spacingAndGlyphs" text-anchor="middle" transform="rotate(-90 560.6 514.6)">134</text>
<path d="M504 482.5L553.8 482.5" stroke="#30f430"/>
<path d="M532.5 549.5L553.8 549.5" stroke="#30f430"/>
<path d="M553.5 482.3L553.5 549.3" stroke="#30f430"/>
<text x="551.2" y="515" fill="#30f430" stroke="#30f430" font-size="5.6" textLength="6.6" lengthAdjust="spacingAndGlyphs" text-anchor="middle" transform="rotate(-90 551.2 515)">53</text>
<path d="M525 494.5L544 494.5" stroke="#30f430"/>
<path d="M543.5 494.6L543.5 514.6" stroke="#30f430"/>
<text x="541.2" y="501" fill="#30f430" stroke="#30f430" font-size="5.6" textLength="5" lengthAdjust="spacingAndGlyphs" text-anchor="middle" transform="rotate(-90 541.2 501)">17</text>
<path d="M586.5 491.3L586.5 530.6" stroke="#30f430"/>
<text x="586.2" y="495.6" fill="#30f430" stroke="#30f430" font-size="5.6" textLength="9" lengthAdjust="spacingAndGlyphs" text-anchor="middle" transform="rotate(-90 586.2 495.6)">Ø16</text>
<path d="M530.6 557.5L587.6 557.5" stroke="#30f430"/>
<path d="M530.6 582.5L563 582.5" stroke="#30f430"/>
<path d="M587.5 557.3L587.5 582.6" stroke="#30f430"/>
<text x="587" y="591" fill="#30f430" stroke="#30f430" font-size="5.6" textLength="9" lengthAdjust="spacingAndGlyphs" text-anchor="middle" transform="rotate(-90 587 591)">Ø20</text>
<path d="M800.2 478.5L829.5 478.5" stroke="#30f430"/>
<path d="M797 551.5L829.5 551.5" stroke="#30f430"/>
<path d="M828.5 478.2L828.5 551.5" stroke="#30f430"/>
<text x="826.8" y="515" fill="#30f430" stroke="#30f430" font-size="5.6" textLength="6.4" lengthAdjust="spacingAndGlyphs" text-anchor="middle" transform="rotate(-90 826.8 515)">90</text>
<path d="M179.5 526.6L179.5 615.4" stroke="#30f430"/>
<path d="M193.5 593.1L193.5 635.3" stroke="#30f430"/>
<path d="M204.5 562.7L204.5 606.5" stroke="#30f430"/>
<path d="M214.5 593.1L214.5 615.4" stroke="#30f430"/>
<path d="M220.5 592.3L220.5 625.4" stroke="#30f430"/>
<path d="M257.5 556.9L257.5 615.4" stroke="#30f430"/>
<path d="M493.5 556.9L493.5 615.4" stroke="#30f430"/>
<path d="M530.5 591.8L530.5 625.4" stroke="#30f430"/>
<path d="M187.9 605.5L209.8 605.5" stroke="#30f430"/>
<path d="M179.3 615.5L493.4 615.5" stroke="#30f430"/>
<path d="M193.4 625.5L530.6 625.5" stroke="#30f430"/>
<path d="M193.4 634.5L802.2 634.5" stroke="#30f430"/>
<text x="194.8" y="603.7" fill="#30f430" stroke="#30f430" font-size="5.6" textLength="8.3" lengthAdjust="spacingAndGlyphs">8.5</text>
<text x="180.9" y="613.7" fill="#30f430" stroke="#30f430" font-size="5.6" textLength="11.2" lengthAdjust="spacingAndGlyphs">11.5</text>
<text x="201.5" y="613.7" fill="#30f430" stroke="#30f430" font-size="5.6" textLength="5.6" lengthAdjust="spacingAndGlyphs">17</text>
<text x="236" y="613.7" fill="#30f430" stroke="#30f430" font-size="5.6" textLength="6.2" lengthAdjust="spacingAndGlyphs">30</text>
<text x="371" y="613.7" fill="#30f430" stroke="#30f430" font-size="5.6" textLength="9.2" lengthAdjust="spacingAndGlyphs">165</text>
<text x="204.3" y="623.7" fill="#30f430" stroke="#30f430" font-size="5.6" textLength="5.9" lengthAdjust="spacingAndGlyphs">22</text>
<text x="371" y="623.6" fill="#30f430" stroke="#30f430" font-size="5.6" textLength="9.2" lengthAdjust="spacingAndGlyphs">353</text>
<text x="493.1" y="633.2" fill="#30f430" stroke="#30f430" font-size="5.6" textLength="9.5" lengthAdjust="spacingAndGlyphs">497</text>
<path d="M792.5 563.5L792.5 606.5" stroke="#30f430"/>
<path d="M781.5 593.1L781.5 615.4" stroke="#30f430"/>
<path d="M802.5 593.1L802.5 635.3" stroke="#30f430"/>
<path d="M816.5 526.8L816.5 615.4" stroke="#30f430"/>
<path d="M785.5 605.5L807.7 605.5" stroke="#30f430"/>
<path d="M781.3 615.5L816.4 615.5" stroke="#30f430"/>
<text x="793.9" y="603.7" fill="#30f430" stroke="#30f430" font-size="5.6" textLength="8" lengthAdjust="spacingAndGlyphs">8.5</text>
<text x="789.4" y="613.7" fill="#30f430" stroke="#30f430" font-size="5.6" textLength="5.5" lengthAdjust="spacingAndGlyphs">17</text>
<text x="804.4" y="613.7" fill="#30f430" stroke="#30f430" font-size="5.6" textLength="10.9" lengthAdjust="spacingAndGlyphs">11.5</text>
<path d="M80.3 49.5h1.6M142.7 49.5h-1.6M222.3 49.5h1.6M255.7 49.5h-1.6M259.3 49.5h1.6M491.7 49.5h-1.6M115.3 257.5h1.6M136.7 257.5h-1.6M80.3 267.5h1.6M136.7 267.5h-1.6M206.3 258.5h1.6M790.7 258.5h-1.6M222.3 371.5h1.6M251.7 371.5h-1.6M255.3 371.5h1.6M495.7 371.5h-1.6M181.3 614.5h1.6M191.7 614.5h-1.6M195.3 614.5h1.6M212.7 614.5h-1.6M222.3 614.5h1.6M255.7 614.5h-1.6M259.3 614.5h1.6M491.7 614.5h-1.6M195.3 624.5h1.6M218.7 624.5h-1.6M222.3 624.5h1.6M528.7 624.5h-1.6M195.3 633.5h1.6M800.7 633.5h-1.6M783.3 614.5h1.6M800.7 614.5h-1.6M804.3 614.5h1.6M814.7 614.5h-1.6M191.8 604.5h1.6M191.7 604.5h-1.6M206.3 604.5h1.6M206.2 604.5h-1.6M790.3 604.5h1.6M790.7 604.5h-1.6M804.3 604.5h1.6M804.2 604.5h-1.6M829.5 104.3v1.6M829.5 174.7v-1.6M829.5 304.3v1.6M829.5 326.7v-1.6M829.5 480.3v1.6M829.5 549.7v-1.6M839.5 304.3v1.6M839.5 360.7v-1.6M839.5 293.8v1.6M839.5 294.7v-1.6M553.5 298.3v1.6M553.5 358.7v-1.6M553.5 364.3v1.6M553.5 366.2v-1.6M544.5 306.3v1.6M544.5 351.7v-1.6M156.5 411.3v1.6M156.5 434.7v-1.6M156.5 438.3v1.6M156.5 591.7v-1.6M166.5 461.3v1.6M166.5 568.7v-1.6M563.5 440.3v1.6M563.5 588.7v-1.6M554.5 484.3v1.6M554.5 547.7v-1.6M544.5 496.3v1.6M544.5 512.7v-1.6M587.5 501.8v1.6M587.5 503.7v-1.6M587.5 526.3v1.6M587.5 528.2v-1.6M588.5 559.3v1.6M588.5 580.7v-1.6" stroke="#30f430" opacity="0.75"/>
</svg>
</body>
</html>
